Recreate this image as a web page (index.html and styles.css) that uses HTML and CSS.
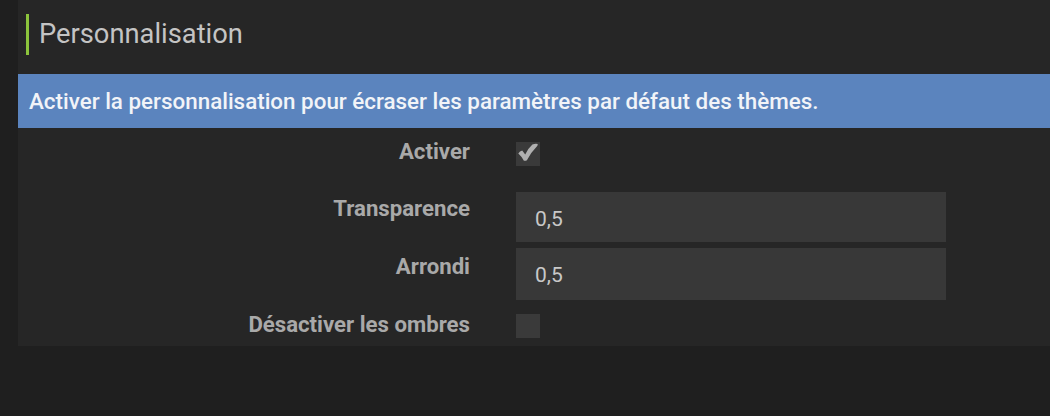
FILE: index.html
```html
<!DOCTYPE html>
<html lang="fr">
<head>
<meta charset="utf-8">
<title>Personnalisation</title>
<link rel="stylesheet" href="styles.css">
</head>
<body>
<section class="panel">
  <header class="panel-head">
    <h2 class="panel-title">Personnalisation</h2>
  </header>
  <div class="banner">Activer la personnalisation pour écraser les paramètres par défaut des thèmes.</div>
  <div class="form">
    <div class="row row-activer">
      <label class="label">Activer</label>
      <span class="check checked"><svg class="tick" viewBox="0 0 24 24" width="24" height="24"><path d="M2.3 11.4 Q3.8 8.8 6.2 8.4 L9.2 12.4 Q12.5 6 16.4 2.6 Q19.4 1.2 21.7 2 Q21.9 3.3 21 4.3 Q14.8 10.6 10.9 18.3 Q9.6 19.1 7.9 18.7 Q5.4 14 2.3 11.4 Z"/></svg></span>
    </div>
    <div class="row row-trans">
      <label class="label">Transparence</label>
      <div class="input">0,5</div>
    </div>
    <div class="row row-arrondi">
      <label class="label">Arrondi</label>
      <div class="input">0,5</div>
    </div>
    <div class="row row-ombres">
      <label class="label">Désactiver les ombres</label>
      <span class="check"></span>
    </div>
  </div>
</section>
</body>
</html>
```

FILE: styles.css
```css
html, body {
  margin: 0;
  padding: 0;
  background: #1f1f1f;
  font-family: Roboto, "Liberation Sans", sans-serif;
}
.panel {
  margin-left: 18px;
  background: #262626;
}
.panel-head {
  height: 74px;
  padding: 14px 0 0 8px;
  box-sizing: border-box;
}
.panel-title {
  margin: 0;
  height: 41px;
  border-left: 3px solid #8cc43c;
  padding-left: 10px;
  font-size: 27.3px;
  font-weight: 400;
  line-height: 41px;
  color: #c4c4c4;
}
.banner {
  height: 54px;
  line-height: 54px;
  background: #5b84be;
  color: #f2f4f8;
  font-size: 22.4px;
  font-weight: 500;
  padding-left: 11px;
  white-space: nowrap;
}
.form {
  padding: 14px 0 8px;
  display: flex;
  flex-direction: column;
}
.row {
  display: flex;
  align-items: flex-start;
  column-gap: 46px;
}
.label {
  width: 452px;
  text-align: right;
  font-size: 22.2px;
  font-weight: 700;
  color: #a9a9a9;
  line-height: 24px;
}
.row-activer .label { margin-top: -3px; }
.row-trans { margin-top: 26px; }
.row-trans .label { margin-top: 4px; }
.row-arrondi { margin-top: 6px; }
.row-arrondi .label { margin-top: 6px; }
.row-ombres { margin-top: 14px; }
.row-ombres .label { margin-top: -2px; }
.check {
  display: block;
  width: 24px;
  height: 24px;
  background: #3a3a3a;
}
.tick {
  display: block;
  fill: #b0b0b0;
}
.input {
  width: 430px;
  height: 50px;
  box-sizing: border-box;
  background: #383838;
  color: #c8c8c8;
  font-size: 21px;
  line-height: 50px;
  padding-left: 19px;
  padding-top: 2px;
}
.row-arrondi .input { height: 52px; line-height: 50px; }
```
